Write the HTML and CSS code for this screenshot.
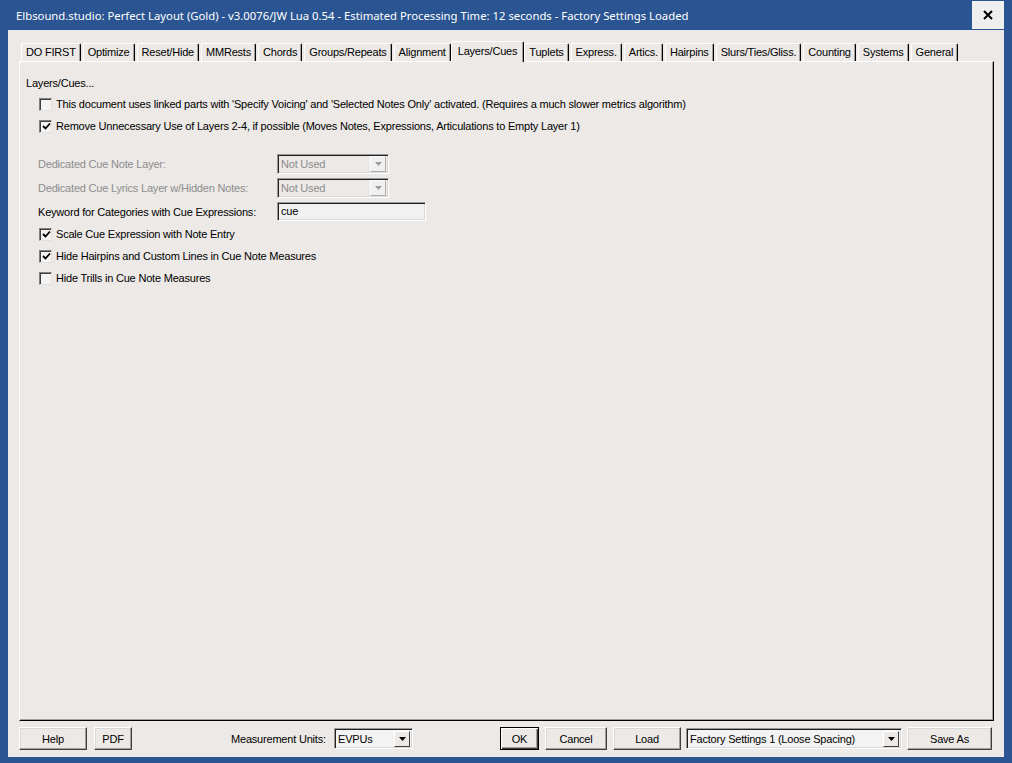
FILE: index.html
```html
<!DOCTYPE html>
<html lang="en">
<head>
  <meta charset="UTF-8">
  <title>Perfect Layout</title>
  <link rel="stylesheet" href="styles.css">
</head>
<body>

<div class="window">
  <div class="titlebar">
    <span class="title">Elbsound.studio: Perfect Layout (Gold) - v3.0076/JW Lua 0.54 - Estimated Processing Time: 12 seconds - Factory Settings Loaded</span>
    <span class="close">
      <svg width="10" height="10" viewBox="0 0 10 10"><path d="M1 1 L9 9 M9 1 L1 9" stroke="#000" stroke-width="2"/></svg>
    </span>
  </div>

  <div class="client">
    <div class="tabs">
      <span class="tab">DO FIRST</span>
      <span class="tab">Optimize</span>
      <span class="tab">Reset/Hide</span>
      <span class="tab">MMRests</span>
      <span class="tab">Chords</span>
      <span class="tab">Groups/Repeats</span>
      <span class="tab">Alignment</span>
      <span class="tab active">Layers/Cues</span>
      <span class="tab">Tuplets</span>
      <span class="tab">Express.</span>
      <span class="tab">Artics.</span>
      <span class="tab">Hairpins</span>
      <span class="tab">Slurs/Ties/Gliss.</span>
      <span class="tab">Counting</span>
      <span class="tab">Systems</span>
      <span class="tab">General</span>
    </div>

    <div class="pane">
      <div class="heading">Layers/Cues...</div>

      <div class="check">
        <span class="box"></span>
        <span>This document uses linked parts with 'Specify Voicing' and 'Selected Notes Only' activated. (Requires a much slower metrics algorithm)</span>
      </div>
      <div class="check">
        <span class="box"><svg width="9" height="9" viewBox="0 0 9 9"><path d="M1 4 L3.5 6.5 L8 1.5" fill="none" stroke="#000" stroke-width="1.8"/></svg></span>
        <span>Remove Unnecessary Use of Layers 2-4, if possible (Moves Notes, Expressions, Articulations to Empty Layer 1)</span>
      </div>

      <div class="field first disabled">
        <span class="field-label">Dedicated Cue Note Layer:</span>
        <span class="combo off">
          <span class="combo-value">Not Used</span>
          <span class="combo-btn"><svg width="7" height="4" viewBox="0 0 7 4"><path d="M0 0 H7 L3.5 4 Z" fill="#a0a0a0"/></svg></span>
        </span>
      </div>
      <div class="field disabled">
        <span class="field-label">Dedicated Cue Lyrics Layer w/Hidden Notes:</span>
        <span class="combo off">
          <span class="combo-value">Not Used</span>
          <span class="combo-btn"><svg width="7" height="4" viewBox="0 0 7 4"><path d="M0 0 H7 L3.5 4 Z" fill="#a0a0a0"/></svg></span>
        </span>
      </div>
      <div class="field keyword">
        <span class="field-label">Keyword for Categories with Cue Expressions:</span>
        <span class="textbox">cue</span>
      </div>

      <div class="check">
        <span class="box"><svg width="9" height="9" viewBox="0 0 9 9"><path d="M1 4 L3.5 6.5 L8 1.5" fill="none" stroke="#000" stroke-width="1.8"/></svg></span>
        <span>Scale Cue Expression with Note Entry</span>
      </div>
      <div class="check">
        <span class="box"><svg width="9" height="9" viewBox="0 0 9 9"><path d="M1 4 L3.5 6.5 L8 1.5" fill="none" stroke="#000" stroke-width="1.8"/></svg></span>
        <span>Hide Hairpins and Custom Lines in Cue Note Measures</span>
      </div>
      <div class="check">
        <span class="box"></span>
        <span>Hide Trills in Cue Note Measures</span>
      </div>
    </div>

    <div class="footer">
      <span class="btn help">Help</span>
      <span class="btn pdf">PDF</span>
      <span class="units-label">Measurement Units:</span>
      <span class="combo units">
        <span class="combo-value">EVPUs</span>
        <span class="combo-btn"><svg width="7" height="4" viewBox="0 0 7 4"><path d="M0 0 H7 L3.5 4 Z" fill="#000"/></svg></span>
      </span>
      <span class="btn ok">OK</span>
      <span class="btn cancel">Cancel</span>
      <span class="btn load">Load</span>
      <span class="combo presets">
        <span class="combo-value">Factory Settings 1 (Loose Spacing)</span>
        <span class="combo-btn"><svg width="7" height="4" viewBox="0 0 7 4"><path d="M0 0 H7 L3.5 4 Z" fill="#000"/></svg></span>
      </span>
      <span class="btn save">Save As</span>
    </div>
  </div>
</div>

</body>
</html>
```

FILE: styles.css
```css
* {
  box-sizing: border-box;
}

body {
  margin: 0;
  font-family: "Liberation Sans", Arial, sans-serif;
  font-size: 11px;
  letter-spacing: -0.2px;
  color: #000;
  background: #2b5592;
}

.window {
  width: 1012px;
  height: 763px;
  display: flex;
  flex-direction: column;
  background: #2b5592;
}

/* title bar */
.titlebar {
  height: 30px;
  display: flex;
  align-items: center;
  padding-left: 16px;
  color: #fff;
}

.title {
  flex: 1;
  font-family: "Noto Sans", "Open Sans", sans-serif;
  font-size: 11.3px;
  letter-spacing: 0;
  white-space: nowrap;
}

.close {
  width: 32px;
  height: 28px;
  margin: 1px 8px 1px 0;
  background: #efefef;
  display: flex;
  align-items: center;
  justify-content: center;
}

/* dialog body */
.client {
  flex: 1;
  margin: 0 8px 6px 8px;
  background: #ece9e6;
  display: flex;
  flex-direction: column;
  padding: 11px 10px 7px 11px;
}

.tabs {
  height: 20px;
  display: flex;
  align-items: flex-end;
  padding-left: 2px;
  position: relative;
  z-index: 1;
}

.tab {
  height: 18px;
  line-height: 16px;
  padding: 0 4px;
  margin-right: 2px;
  border-top: 1px solid #fff;
  border-left: 1px solid #fff;
  border-right: 1px solid #000;
  border-radius: 2px 2px 0 0;
  box-shadow: inset -1px 0 0 #a0a0a0;
  white-space: nowrap;
}

.tab.active {
  height: 21px;
  margin: 0 0 -1px -2px;
  padding: 1px 6px 0 6px;
  background: #ece9e6;
}

.pane {
  flex: 1;
  border: 1px solid;
  border-color: #fff #000 #000 #fff;
  box-shadow: inset -1px -1px 0 #a0a0a0;
  padding: 14px 6px 0 6px;
  display: flex;
  flex-direction: column;
}

.heading {
  height: 14px;
  line-height: 14px;
  margin-bottom: 3px;
}

.check {
  height: 22px;
  display: flex;
  align-items: center;
  padding-left: 13px;
}

.box {
  width: 13px;
  height: 13px;
  margin-right: 4px;
  background: #f4f4f4;
  border: 1px solid;
  border-color: #808080 #e0e0e0 #e0e0e0 #808080;
  box-shadow: inset 1px 1px 0 #404040;
  display: flex;
  align-items: center;
  justify-content: center;
  padding: 1px 0 0 1px;
}

.field {
  height: 24px;
  display: flex;
  align-items: center;
  padding-left: 12px;
}

.field.first {
  margin-top: 15px;
}

.field.keyword {
  height: 23px;
}

.field-label {
  width: 239px;
}

.disabled .field-label {
  color: #8d8d8d;
}

/* combo boxes and text boxes */
.combo {
  height: 20px;
  display: flex;
  align-items: center;
  border: 1px solid;
  border-color: #9a9a9a #fff #fff #9a9a9a;
  box-shadow: inset 1px 1px 0 #202020, inset -1px -1px 0 #d8d8d8;
  padding: 2px;
  background: #f3f3f3;
}

.combo.off {
  width: 112px;
  background: #ece9e6;
  color: #8d8d8d;
}

.combo-value {
  flex: 1;
  padding-left: 1px;
  white-space: nowrap;
}

.combo-btn {
  width: 16px;
  height: 16px;
  background: #ece9e6;
  border: 1px solid;
  border-color: #fff #404040 #404040 #fff;
  display: flex;
  align-items: center;
  justify-content: center;
}

.combo.off .combo-btn {
  background: #f0f0f0;
  border-color: #fff #b0b0b0 #b0b0b0 #fff;
}

.textbox {
  width: 149px;
  height: 19px;
  line-height: 15px;
  padding: 1px 3px;
  background: #f1f1f1;
  border: 1px solid;
  border-color: #9a9a9a #fff #fff #9a9a9a;
  box-shadow: inset 1px 1px 0 #202020, inset -1px -1px 0 #d8d8d8;
}

/* bottom buttons */
.footer {
  height: 23px;
  margin-top: 6px;
  display: flex;
  align-items: center;
}

.btn {
  height: 23px;
  display: flex;
  align-items: center;
  justify-content: center;
  border: 1px solid;
  border-color: #fff #404040 #404040 #fff;
  box-shadow: inset -1px -1px 0 #a0a0a0, inset 1px 1px 0 #d8d8d8;
  white-space: nowrap;
}

.btn.help { width: 68px; }
.btn.pdf { width: 38px; margin-left: 7px; }

.units-label {
  margin-left: 99px;
  width: 103px;
}

.combo.units {
  width: 79px;
  height: 21px;
}

.btn.ok {
  width: 39px;
  margin-left: 87px;
  border-color: #000;
  box-shadow: inset 1px 1px 0 #fff, inset -1px -1px 0 #404040, inset -2px -2px 0 #a0a0a0;
}

.btn.cancel { width: 62px; margin-left: 6px; }
.btn.load { width: 68px; margin-left: 6px; }

.combo.presets {
  width: 216px;
  height: 21px;
  margin-left: 5px;
}

.btn.save { width: 85px; margin-left: 5px; }
```
